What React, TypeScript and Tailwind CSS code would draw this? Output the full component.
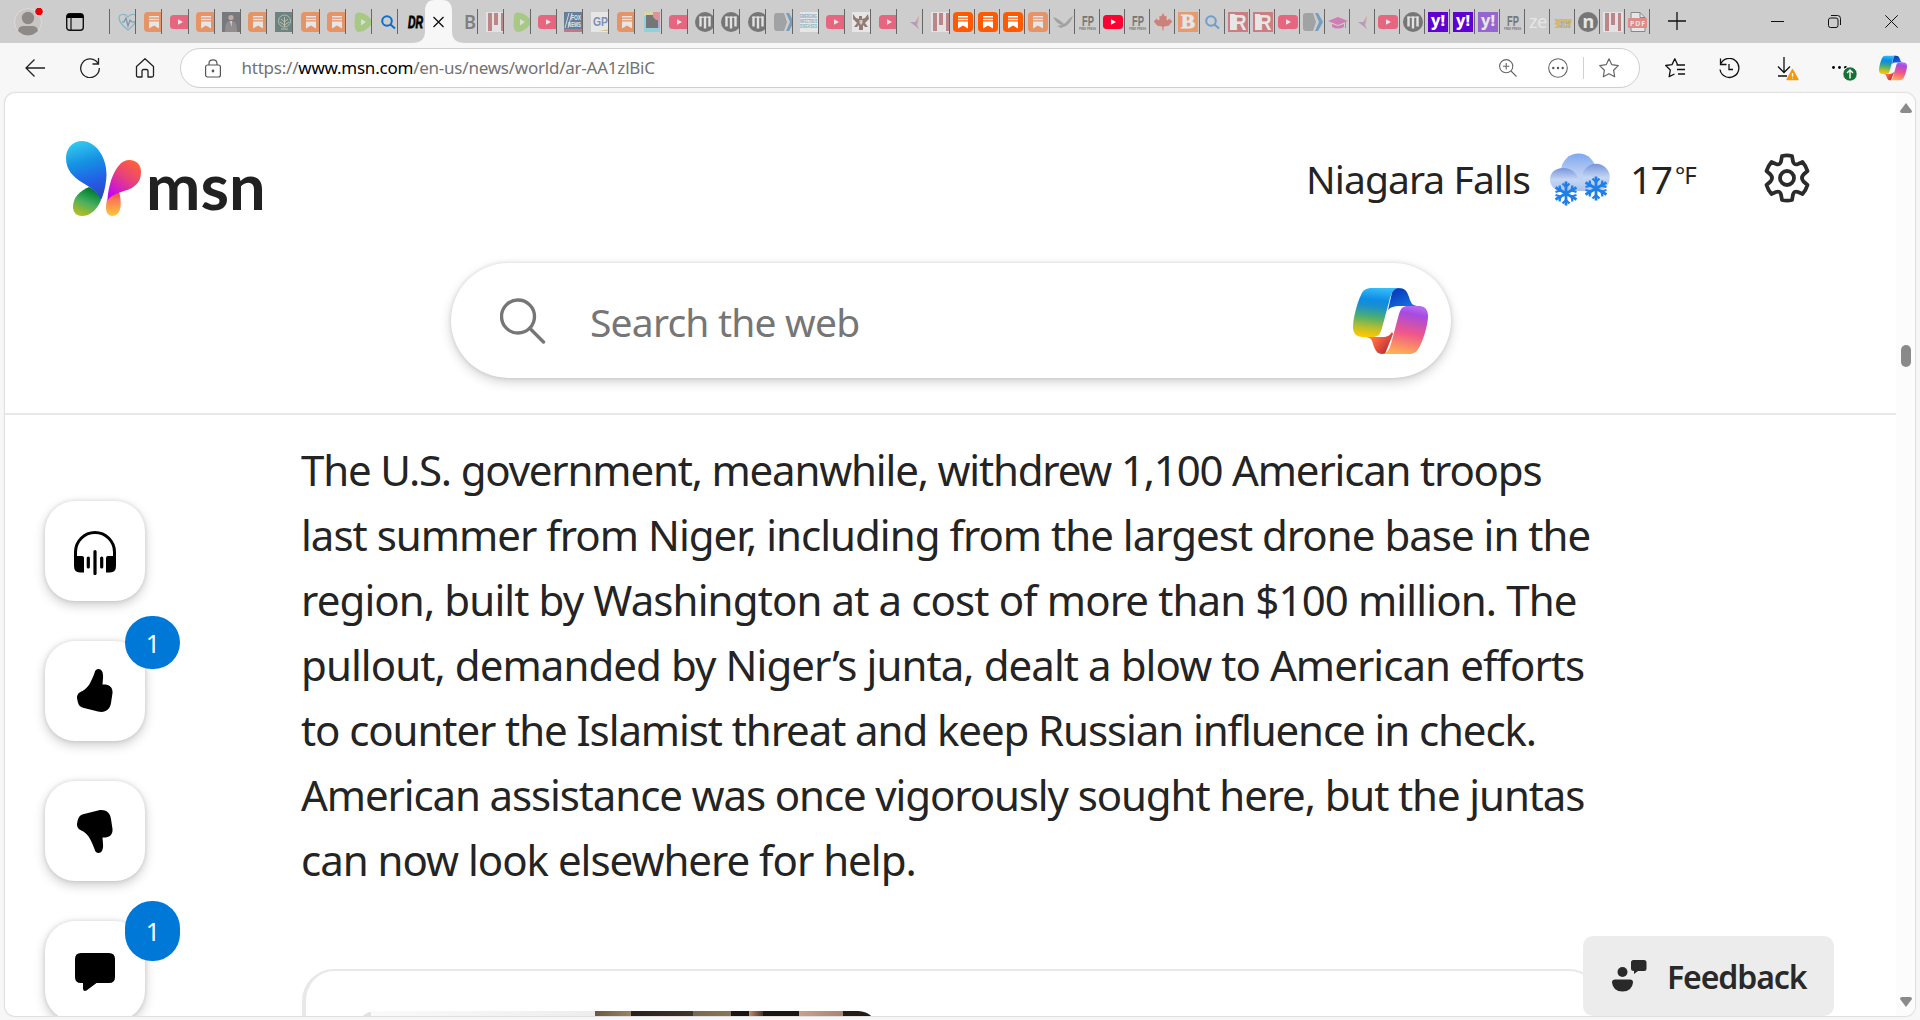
import React from "react";
import clsx from "clsx";

type Favicon = { kind: string; dim?: boolean };

const faded = (kind: string): Favicon => ({ kind, dim: true });
const live = (kind: string): Favicon => ({ kind });

const TABS_BEFORE: Favicon[] = [
  faded("heart"), faded("substack"), faded("youtube"), faded("substack"), faded("portrait"), faded("substack"),
  faded("tree"), faded("substack"), faded("substack"), faded("rumble"), live("search"),
];

const TABS_AFTER: Favicon[] = [
  faded("letterB"), faded("bars"), faded("rumble"), faded("youtube"), faded("fox"), faded("gp"), faded("substack"),
  faded("docs"), faded("youtube"), faded("medal"), faded("medal"), faded("medal"), faded("arrow"), faded("eid"),
  faded("youtube"), faded("seal"), faded("youtube"), faded("bird"), faded("bars"),
];

const TABS_END: Favicon[] = [
  live("substack"), live("substack"), live("substack"), faded("substack"), faded("hawk"), faded("fp"), live("youtube"),
  faded("fp"), faded("maple"), faded("breit"), faded("search"), faded("real"), faded("real"), faded("youtube"),
  faded("arrow"), faded("cap"), faded("bird"), faded("youtube"), faded("medal"), live("yahoo"), live("yahoo"),
  faded("yahoo"), faded("fp"), faded("ze"), faded("sk"), faded("nord"), faded("bars"), faded("pdf"),
];

function glyph(kind: string) {
  switch (kind) {
    case "heart":
      return (
        <g fill="none" stroke="#35a3c9" strokeWidth="1.2">
          <path d="M10 18C5 14 1 10 1 6C1 2 7 1 10 5C13 1 19 2 19 6C19 10 15 14 10 18Z" />
          <path d="M4 10H6L8 6L10 14L12 8L14 10H17" stroke="#225c88" />
        </g>
      );
    case "substack":
      return (
        <g>
          <rect width="20" height="20" rx="4" fill="#ff5a00" />
          <path d="M5 4H15V5.6H5ZM5 6.8H15V8.2H5ZM5 9.4H15V16.5L10 13.4L5 16.5Z" fill="#fff" />
        </g>
      );
    case "youtube":
      return (
        <g>
          <rect y="3" width="20" height="14" rx="3.5" fill="#ff0033" />
          <path d="M8 7.2L13 10L8 12.8Z" fill="#fff" />
        </g>
      );
    case "portrait":
      return (
        <g>
          <rect width="18" height="20" fill="#24292e" />
          <circle cx="9" cy="5.5" r="2.6" fill="#b58b78" />
          <path d="M3 20C3 11 5 9 9 9S15 11 15 20" fill="#5a4f52" />
          <path d="M8 9H10L9.5 15Z" fill="#ddd" />
        </g>
      );
    case "tree":
      return (
        <g>
          <rect width="19" height="20" fill="#123c36" />
          <circle cx="9.5" cy="9" r="6" fill="none" stroke="#79b7a0" />
          <path d="M9.5 15V5M6 7L9.5 10L13 7M5 10L9.5 13L14 10M6 17H13" stroke="#b4b183" fill="none" />
        </g>
      );
    case "rumble":
      return (
        <g>
          <path d="M2 4C2 0 6 0 9 1C13 2 17 5 18.500 8C19.500 10 19 12 17 14C14 17 10 20 6 20C3 20 2 17 1.500 13Z" fill="#85c742" />
          <path d="M8 7L13 10L8 13.500Z" fill="#e6f4d6" />
        </g>
      );
    case "search":
      return (
        <g fill="none" stroke="#0b6fd0" strokeWidth="2">
          <circle cx="8" cy="9" r="4.800" />
          <path d="M11.500 12.500L16 16.500" />
        </g>
      );
    case "letterB":
      return <text x="4" y="17" fontSize="20" fontWeight="600" fill="#333" textLength="12" lengthAdjust="spacingAndGlyphs" className="font-['Noto_Sans']">B</text>;
    case "bars":
      return (
        <g>
          <rect width="20" height="20" fill="#f7f7f7" />
          <path d="M2 1H6V19H2ZM8 1H12V13H8ZM15 1H18V19H15Z" fill="#ad3f45" />
        </g>
      );
    case "fox":
      return (
        <g className="font-['Liberation_Sans'] font-bold">
          <rect width="19" height="20" fill="#003366" />
          <rect y="17" width="19" height="3" fill="#c5222b" />
          <path d="M1 16L5 1M4 16L8 1" stroke="#dce6f3" />
          <text x="7" y="8" fontSize="7" fill="#fff" textLength="10" lengthAdjust="spacingAndGlyphs">FOX</text>
          <text x="4" y="15" fontSize="7" fill="#fff" textLength="13" lengthAdjust="spacingAndGlyphs">NEWS</text>
        </g>
      );
    case "gp":
      return (
        <g>
          <rect width="20" height="20" fill="#fff" />
          <text x="2" y="14" fontSize="12" fontWeight="700" fill="#2d4fa0" textLength="15" lengthAdjust="spacingAndGlyphs" className="font-['Liberation_Sans']">GP</text>
          <path d="M8 19H20V17Z" fill="#eeb43d" />
        </g>
      );
    case "docs":
      return (
        <g>
          <path d="M1 0H11V3H1Z" fill="#ede07a" />
          <path d="M1 4H4V16H17V20H1Z" fill="#57d6eb" />
          <path d="M3 3H11L16 8V16H3Z" fill="#222" />
          <path d="M10 0H17V8H13L10 5Z" fill="#ed5d64" />
          <path d="M15 8H17V16H15Z" fill="#b47bd6" />
        </g>
      );
    case "medal":
      return (
        <g>
          <circle cx="10" cy="10" r="10" fill="#222" />
          <path d="M5.500 4.500V14.500M10 4.500V16.500M14.500 4.500V14.500" stroke="#f5f5f5" strokeWidth="2.400" fill="none" />
          <path d="M4.500 5.200H15.500" stroke="#f5f5f5" strokeWidth="1.200" />
        </g>
      );
    case "arrow":
      return (
        <g>
          <path d="M3 1H10L13 10L10 19H3Q0 19 0 16V4Q0 1 3 1Z" fill="#76797c" />
          <path d="M12 1H15L20 10L15 19H12L16 10Z" fill="#1d72b5" />
        </g>
      );
    case "eid":
      return (
        <g className="font-['Liberation_Sans'] font-bold">
          <rect width="18" height="20" fill="#fff" />
          <text x="0" y="6" fontSize="5" fill="#447db5" textLength="17" lengthAdjust="spacingAndGlyphs">EMERGING</text>
          <text x="0" y="11" fontSize="5" fill="#447db5" textLength="17" lengthAdjust="spacingAndGlyphs">INFECTIOUS</text>
          <text x="0" y="16" fontSize="5" fill="#22a0a5" textLength="17" lengthAdjust="spacingAndGlyphs">DISEASES</text>
        </g>
      );
    case "seal":
      return (
        <g>
          <rect width="18" height="20" fill="#fff" />
          <path d="M1 2L4 6L7 7V4H10V7L13 6L16 2L17 7L13 11L16 15L13 15L11 13L11 18H7L7 13L5 15L2 15L5 11L1 7Z" fill="#5b2a20" />
          <path d="M7.500 8H10.500V11L9 13L7.500 11Z" fill="#d6c7b0" />
        </g>
      );
    case "bird":
      return (
        <g>
          <path d="M5 10L10 10L13 6L12 13L14 17L9 13Z" fill="#9b6aa8" />
          <path d="M11 10L14 3L13 12Z" fill="#e0813c" />
        </g>
      );
    case "hawk":
      return <path d="M0 5C4 6 8 9 11 12C14 10 16 6 20 4C18 9 16 12 13 14L8 16L4 14L9 13C5 12 2 9 0 5Z" fill="#777" />;
    case "fp":
      return (
        <g className="font-['Liberation_Sans_Narrow','Liberation_Sans'] font-bold" fill="#222">
          <text x="4" y="14" fontSize="15.500" textLength="12" lengthAdjust="spacingAndGlyphs">FP</text>
          <text x="1" y="17.500" fontSize="2.800" textLength="17" lengthAdjust="spacingAndGlyphs">FREE PRESS</text>
        </g>
      );
    case "maple":
      return <path d="M10 0L12 4L14 3V8L17 6L18 8L20 9L16 14L11 15V19H9V15L4 14L0 9L2 8L3 6L6 8V3L8 4Z" fill="#c8392b" stroke="#eed8d4" strokeWidth=".7" />;
    case "breit":
      return (
        <g>
          <rect width="20" height="20" fill="#ff6a13" />
          <text x="3" y="16" fontSize="19" fontWeight="700" fill="#fff" stroke="#fff" strokeWidth=".8" textLength="14" lengthAdjust="spacingAndGlyphs" className="font-['Liberation_Serif']">B</text>
        </g>
      );
    case "real":
      return (
        <g>
          <rect width="20" height="20" fill="#c8323a" />
          <path d="M2 2H7V18H2Z" fill="#fff" />
          <text x="5" y="18" fontSize="22" fill="#fff" fontWeight="700" textLength="13.500" lengthAdjust="spacingAndGlyphs" className="font-['Liberation_Sans']">R</text>
        </g>
      );
    case "cap":
      return (
        <g fill="#d32fa0">
          <path d="M0 9L10 5L20 9L10 13Z" />
          <path d="M4 12L10 14L16 12V15Q10 18 4 15Z" />
          <path d="M17 10H18V16H17Z" />
        </g>
      );
    case "yahoo":
      return (
        <g>
          <rect width="20" height="20" fill="#5f01d1" />
          <text x="3" y="14" fontSize="15" fontWeight="800" fill="#fff" textLength="14" lengthAdjust="spacingAndGlyphs" className="font-['Noto_Sans']">y!</text>
        </g>
      );
    case "ze":
      return <text x="1" y="16" fontSize="20" fill="#fff" textLength="18" lengthAdjust="spacingAndGlyphs" className="font-['Lato']">ze</text>;
    case "sk":
      return (
        <g>
          <path d="M1 7H19L17 16H1L4 13L1 12L3 10Z" fill="#d9a514" />
          <text x="6" y="15" fontSize="8" fontWeight="700" fill="#fff" stroke="#555" strokeWidth=".4" className="font-['Liberation_Sans']">SK</text>
        </g>
      );
    case "nord":
      return (
        <g>
          <circle cx="10" cy="10" r="10" fill="#222" />
          <text x="4.500" y="15.500" fontSize="18" fontWeight="700" fill="#fff" className="font-['Noto_Sans']">n</text>
        </g>
      );
    case "pdf":
      return (
        <g>
          <path d="M3 .5H12L17 5.500V19.500H3Z" fill="#fff" stroke="#444" />
          <path d="M12 .5V5.500H17" fill="none" stroke="#444" />
          <rect x="0" y="6" width="19" height="10" rx="1" fill="#ee4d4a" />
          <text x="2" y="13.500" fontSize="7" fontWeight="700" fill="#fff" textLength="15" className="font-['Noto_Sans']">PDF</text>
        </g>
      );
    default:
      return null;
  }
}

function Tab({ icon, tight }: { icon: Favicon; tight?: boolean }) {
  return (
    <div className={clsx("flex shrink-0 items-center", tight ? "w-[25px]" : "w-[26.2px]")}>
      <div className={clsx("flex h-[43px] flex-1 items-center overflow-hidden", tight ? "pl-[3.500px]" : "pl-[7.500px]")}>
        <svg width="20" height="20" viewBox="0 0 20 20" className={clsx("shrink-0 overflow-visible", icon.dim && "opacity-50")}>
          {glyph(icon.kind)}
        </svg>
      </div>
      <div className="h-[25px] w-px shrink-0 bg-[#666]" />
    </div>
  );
}

function CopilotIcon({ id, className }: { id: string; className: string }) {
  return (
    <svg viewBox="0 0 75 66" className={className}>
      <defs>
        <linearGradient id={id + "a"} x1=".55" y1="0" x2=".45" y2="1">
          <stop offset="0" stopColor="#36bcf8" />
          <stop offset=".25" stopColor="#0e8ce4" />
          <stop offset=".38" stopColor="#1a90d0" />
          <stop offset=".6" stopColor="#4bae73" />
          <stop offset=".82" stopColor="#b8bf2d" />
          <stop offset="1" stopColor="#ffc800" />
        </linearGradient>
        <linearGradient id={id + "b"} x1=".6" y1="0" x2=".4" y2="1">
          <stop offset="0" stopColor="#b468f0" />
          <stop offset=".15" stopColor="#a64be0" />
          <stop offset=".55" stopColor="#f0568b" />
          <stop offset="1" stopColor="#ffb152" />
        </linearGradient>
        <linearGradient id={id + "c"} x1=".3" y1="0" x2="1" y2="1">
          <stop offset="0" stopColor="#0a37b8" />
          <stop offset="1" stopColor="#1486ed" />
        </linearGradient>
        <linearGradient id={id + "d"} x1="0" y1="0" x2="1" y2=".6">
          <stop offset="0" stopColor="#ff9746" />
          <stop offset=".5" stopColor="#f8623e" />
          <stop offset="1" stopColor="#b82e39" />
        </linearGradient>
      </defs>
      <path d="M40 0H45C52 0 54 3 56 9C58 16 60 18 66 18H46C41 18 38 19 35 22Z" fill={`url(#${id}c)`} />
      <path d="M39 44L40 46L32 66H29C24 66 22 62 20 56C19 51 17 49 11 49H29C35 49 37 47 39 44Z" fill={`url(#${id}d)`} />
      <path d="M19 0H47C40 0 38 6 36 14L29 40C27 47 25 49 19 49H10C3 49 0 45 0 39C0 31 4 15 8 7C10 2 13 0 19 0Z" fill={`url(#${id}a)`} />
      <path d="M56 66H28C35 66 37 60 39 52L46 26C48 20 50 18 55 18H66C72 18 75 22 75 28C75 36 71 50 67 58C64 64 61 66 56 66Z" fill={`url(#${id}b)`} />
    </svg>
  );
}

function TabStrip() {
  return (
    <div className="flex h-[43px] bg-[#cdcdcd]">
      <div className="flex w-[109px] shrink-0 items-center pl-[14px]">
        <svg width="30" height="34" viewBox="0 0 30 34">
          <circle cx="14" cy="17" r="13.500" fill="#c8c6c4" stroke="#dedbd6" />
          <circle cx="14" cy="13" r="6.200" fill="#8c8986" />
          <path d="M4 26C5 20 9 21 14 21S23 20 24 26Q14 35 4 26Z" fill="#8c8986" />
          <circle cx="25" cy="6.500" r="4.300" fill="#e60000" stroke="#e6e6e6" />
        </svg>
        <svg width="18" height="18" viewBox="0 0 18 18" className="ml-[22px]">
          <rect x=".7" y=".7" width="16.600" height="16.600" rx="3" fill="none" stroke="#111" strokeWidth="1.400" />
          <path d="M1 5V3Q1 .7 3 .7H15Q17 .7 17 3V5Z" />
          <path d="M5 5V17" stroke="#111" strokeWidth="1.200" />
        </svg>
      </div>
      <div className="flex items-center">
        <div className="h-[25px] w-px shrink-0 bg-[#666]" />
        {TABS_BEFORE.map((t, i) => (
          <Tab key={i} icon={t} />
        ))}
      </div>
      <svg width="27" height="43" viewBox="0 0 27 43" className="shrink-0 overflow-visible">
        <text x="10" y="27.500" fontSize="16" fontWeight="900" fontStyle="italic" stroke="#000" strokeWidth=".8" textLength="15" lengthAdjust="spacingAndGlyphs" className="font-['Liberation_Sans']">DR</text>
      </svg>
      <svg width="53" height="43" viewBox="0 0 53 43" className="-mx-[13px] shrink-0">
        <path d="M0 43C9 43 13 39 13 31V11C13 3 17 0 23 0H30C36 0 40 3 40 11V31C40 39 44 43 53 43Z" fill="#f7f7f7" />
        <path d="M21.500 17L31.500 27M31.500 17L21.500 27" stroke="#111" strokeWidth="1.300" />
      </svg>
      <div className="flex items-center">
        {TABS_AFTER.map((t, i) => (
          <Tab key={i} icon={t} />
        ))}
        {TABS_END.map((t, i) => (
          <Tab key={i} icon={t} tight />
        ))}
      </div>
      <div className="flex flex-1 items-center justify-between pl-[18px] pr-[22px]">
        <svg width="18" height="18" viewBox="0 0 18 18" className="-mt-0.5">
          <path d="M9 0V18M0 9H18" stroke="#111" strokeWidth="1.300" />
        </svg>
        <div className="flex items-center gap-[44px]">
          <svg width="13" height="13" viewBox="0 0 13 13"><path d="M0 6.500H13" stroke="#111" /></svg>
          <svg width="13" height="13" viewBox="0 0 13 13" fill="none" stroke="#111">
            <rect x=".5" y="3" width="9.500" height="9.500" rx="2" />
            <path d="M3 .5H9.500Q12.500 .5 12.500 3.500V10" />
          </svg>
          <svg width="13" height="13" viewBox="0 0 13 13"><path d="M.3.3L12.700 12.700M12.700.3L.3 12.700" stroke="#111" /></svg>
        </div>
      </div>
    </div>
  );
}

function Toolbar() {
  return (
    <div className="flex h-[50px] items-center">
      <div className="flex w-[180px] items-center gap-[35px] pl-[25px]">
        <svg width="20" height="20" viewBox="0 0 20 20" fill="none" stroke="#222" strokeWidth="1.300">
          <path d="M20 10H1M9.500 1.500L1 10L9.500 18.500" />
        </svg>
        <svg width="20" height="20" viewBox="0 0 20 20" fill="none" stroke="#222" strokeWidth="1.300">
          <path d="M18 5.500A9.300 9.300 0 1 0 19.300 10M18.500 0V6H12.500" />
        </svg>
        <svg width="20" height="20" viewBox="0 0 20 20" fill="none" stroke="#222" strokeWidth="1.300" strokeLinejoin="round">
          <path d="M1.500 8.500L10 .8L18.500 8.500V17.500Q18.500 19 17 19H13V13Q13 11.500 11.500 11.500H8.500Q7 11.500 7 13V19H3Q1.500 19 1.500 17.500Z" />
        </svg>
      </div>
      <div className="flex h-[40px] w-[1460px] items-center rounded-full border border-[#cfcfcf] bg-white pl-6 pr-5">
        <svg width="16" height="19" viewBox="0 0 16 19" fill="none" stroke="#555" strokeWidth="1.200">
          <rect x=".6" y="6" width="14.800" height="12" rx="2" />
          <path d="M4 6V4.500Q4 .8 8 .8T12 4.500V6" />
          <circle cx="8" cy="12" r=".8" fill="#555" />
        </svg>
        <span className="ml-[20.500px] flex-1 whitespace-nowrap text-[17px] tracking-[-0.230px] text-[#727272]">
          https://<span className="text-black">www.msn.com</span>/en-us/news/world/ar-AA1zlBiC
        </span>
        <svg width="18" height="18" viewBox="0 0 18 18" fill="none" stroke="#666" strokeWidth="1.100">
          <circle cx="7.200" cy="7.200" r="6.600" />
          <path d="M12 12L17.500 17.500M4 7.200H10.400M7.200 4V10.400" />
        </svg>
        <svg width="20" height="20" viewBox="0 0 20 20" fill="none" stroke="#666" strokeWidth="1.100" className="ml-[31px]">
          <circle cx="10" cy="10" r="9.300" />
          <g fill="#555" stroke="none"><circle cx="5.300" cy="10" r="1.200" /><circle cx="10" cy="10" r="1.200" /><circle cx="14.700" cy="10" r="1.200" /></g>
        </svg>
        <div className="mx-[15px] h-[22px] w-px bg-[#d2d2d2]" />
        <svg width="20" height="20" viewBox="0 0 20 20" fill="none" stroke="#666" strokeWidth="1.200" strokeLinejoin="round">
          <path d="M10 .8L12.800 6.700L19.300 7.600L14.600 12.200L15.700 18.800L10 15.700L4.300 18.800L5.400 12.200L.7 7.600L7.200 6.700Z" />
        </svg>
      </div>
      <div className="flex flex-1 items-center pl-[25px]">
        <svg width="20" height="20" viewBox="0 0 20 20" fill="none" stroke="#111" strokeWidth="1.300" strokeLinejoin="round">
          <path d="M12.500 6.500L9.800 .8L7 6.600L.7 7.500L5.300 12L4.200 18.700L9.500 16M11.500 7H20M12 11.500H20M13 16H20" />
        </svg>
        <svg width="21" height="21" viewBox="0 0 21 21" fill="none" stroke="#111" strokeWidth="1.300" className="ml-[34px]">
          <path d="M1.500 6.500A9.500 9.500 0 1 1 1 11.500M1.500 .5V6.500H7.500M10 6V11.500H14" />
        </svg>
        <svg width="22" height="24" viewBox="0 0 22 24" fill="none" stroke="#111" strokeWidth="1.300" className="mt-[2px] ml-[37px]">
          <path d="M7 0V15M1 9.500L7 15.500L13 9.500M1 19H10" />
          <path d="M15.500 12.500L21 22.500H10Z" fill="#f7980b" stroke="#f7980b" strokeLinejoin="round" />
          <path d="M15.500 16V19.500M15.500 20.700V21.600" stroke="#fff" />
        </svg>
        <svg width="26" height="24" viewBox="0 0 26 24" className="mt-[6px] ml-[32px]">
          <circle cx="2.500" cy="8.500" r="1.400" /><circle cx="8.500" cy="8.500" r="1.400" /><circle cx="14.500" cy="8.500" r="1.400" />
          <circle cx="19" cy="15" r="7.200" fill="#127334" stroke="#f7f7f7" />
          <path d="M19 19.500V11M16 14L19 11L22 14" fill="none" stroke="#fff" strokeWidth="1.400" />
        </svg>
        <CopilotIcon id="bar" className="ml-[22px] h-[26px] w-[28px]" />
      </div>
    </div>
  );
}

function MsnLogo() {
  return (
    <div className="flex items-start">
      <svg width="75" height="75" viewBox="0 0 75 75">
        <defs>
          <linearGradient id="wingBlue" x1=".4" y1="0" x2=".6" y2="1">
            <stop offset="0" stopColor="#33c7ee" />
            <stop offset=".35" stopColor="#1592e3" />
            <stop offset=".7" stopColor="#235fe6" />
            <stop offset="1" stopColor="#2949c2" />
          </linearGradient>
          <linearGradient id="wingGreen" x1=".7" y1="0" x2=".3" y2="1">
            <stop offset="0" stopColor="#006b22" />
            <stop offset=".25" stopColor="#159142" />
            <stop offset=".55" stopColor="#4cb05e" />
            <stop offset="1" stopColor="#b9bd20" />
          </linearGradient>
          <linearGradient id="wingPink" x1=".8" y1="0" x2=".2" y2="1">
            <stop offset="0" stopColor="#ff6236" />
            <stop offset=".45" stopColor="#e6407f" />
            <stop offset="1" stopColor="#c000ff" />
          </linearGradient>
          <linearGradient id="wingOrange" x1=".5" y1="0" x2=".5" y2="1">
            <stop offset="0" stopColor="#e84a43" />
            <stop offset=".35" stopColor="#ff7b55" />
            <stop offset="1" stopColor="#ffc936" />
          </linearGradient>
        </defs>
        <path d="M23 46C29 49 33 53 35 59C31 69 24 75 16 75C10 75 7 71 7 66C7 56 14 50 23 46Z" fill="url(#wingGreen)" />
        <path d="M16 0C30 0 41 17 40.500 34C40 45 37.500 54 35 59C31 50 25 47 17 42C7 36 0 29 0 17C0 7 7 0 16 0Z" fill="url(#wingBlue)" />
        <path d="M53 51C56 60 56 75 46.500 75C38 75 40 63 41 59C44 54 49 53 53 51Z" fill="url(#wingOrange)" />
        <path d="M41.500 59.500C42.500 40 51 19 63 19C71 19 75 24 75 31C75 49 57 49 48 54C45 55 43 57 41.500 59.500Z" fill="url(#wingPink)" />
      </svg>
      <span className="ml-[5px] mt-[12px] text-[65px] leading-[65px] font-bold text-[#212121] font-['Lato',sans-serif]">msn</span>
    </div>
  );
}

function SnowCloud() {
  return (
    <svg width="60" height="54" viewBox="0 0 60 54">
      <defs>
        <linearGradient id="cloudBack" x1="0" y1="0" x2="0" y2="1">
          <stop offset="0" stopColor="#7fa8ef" />
          <stop offset=".6" stopColor="#bdd0f3" />
          <stop offset="1" stopColor="#cbdcf5" />
        </linearGradient>
        <linearGradient id="cloudFront" x1="0" y1="0" x2="0" y2="1">
          <stop offset="0" stopColor="#7594dc" />
          <stop offset=".5" stopColor="#c4d6f3" />
          <stop offset="1" stopColor="#a9c2ee" />
        </linearGradient>
        <g id="flake" stroke="#1f7fe8" strokeWidth="2.800" fill="none">
          <path d="M0 -12V12M-10.500 -6L10.500 6M-10.500 6L10.500 -6" />
          <path d="M-3.500 -10L0 -6.500L3.500 -10M-3.500 10L0 6.500L3.500 10M-10.500 -1.500L-5.500 -3L-6.500 -8M10.500 1.500L5.500 3L6.500 8M-10.500 1.500L-5.500 3L-6.500 8M10.500 -1.500L5.500 -3L6.500 -8" strokeWidth="2.200" />
        </g>
      </defs>
      <circle cx="28.500" cy="18" r="17.500" fill="url(#cloudBack)" />
      <path d="M14 38V24H44V38Z" fill="#c0d2f2" />
      <circle cx="46" cy="24.500" r="13.800" fill="url(#cloudFront)" />
      <path d="M13 15C23 15 28 22 28 27L44 28V38H13C5 38 0 33 0 26.500S5 15 13 15Z" fill="url(#cloudFront)" />
      <use href="#flake" x="16" y="40.500" />
      <use href="#flake" x="46" y="35.500" />
    </svg>
  );
}

function SiteHeader() {
  return (
    <header className="h-[322px] border-b-2 border-[#e8e8e8]">
      <div className="flex h-[170px] items-start justify-between pl-[61px] pr-[85px]">
        <div className="pt-[48px]">
          <MsnLogo />
        </div>
        <div className="flex items-start pt-[60px] text-[#242424]">
          <span className="mt-[-2px] w-[244px] whitespace-nowrap text-[39px] leading-[56px] tracking-[-0.900px]">Niagara Falls</span>
          <SnowCloud />
          <span className="mt-[-2px] ml-[20px] w-[45px] whitespace-nowrap text-[39px] leading-[56px] tracking-[-1.500px]">17</span>
          <span className="mt-[6px] w-[22px] text-[24px] leading-8 tracking-[-1px]">°F</span>
          <svg width="48" height="50" viewBox="-1 0 47 50" fill="none" stroke="#2b2b2b" strokeWidth="3.800" strokeLinejoin="round" className="ml-[66px]">
            <circle cx="22.500" cy="25" r="7" />
            <path d="M17.500 3Q22.500 1.800 27.500 3L28.500 8.500Q29.500 12.500 33.500 11L38 9Q41.500 13 43 18L39 21.500Q36 25 39 28.500L43 32Q41.500 37 38 41L33.500 39Q29.500 37.500 28.500 41.500L27.500 47Q22.500 48.200 17.500 47L16.500 41.500Q15.500 37.500 11.500 39L7 41Q3.500 37 2 32L6 28.500Q9 25 6 21.500L2 18Q3.500 13 7 9L11.500 11Q15.500 12.500 16.500 8.500Z" />
          </svg>
        </div>
      </div>
      <div className="ml-[446px] flex h-[115px] w-[1000px] items-center rounded-full bg-white pl-[49px] pr-[23px] shadow-[0_4px_12px_rgba(0,0,0,0.18),0_0_4px_rgba(0,0,0,0.12)]">
        <svg width="46" height="46" viewBox="0 0 46 46" fill="none" stroke="#767676" strokeWidth="3.400" strokeLinecap="round">
          <circle cx="18" cy="18.500" r="16.500" />
          <path d="M30 30.500L43.500 44" />
        </svg>
        <span className="ml-[44px] mt-[2px] flex-1 whitespace-nowrap text-[39px] leading-[56px] tracking-[-0.800px] text-[#767676]">Search the web</span>
        <CopilotIcon id="search" className="h-[66px] w-[75px]" />
      </div>
    </header>
  );
}

function ActionButton({ badge, tall, children }: { badge?: number; tall?: boolean; children: React.ReactNode }) {
  return (
    <div className="relative flex size-[100px] shrink-0 items-center justify-center rounded-[30px] bg-white shadow-[0_4px_12px_rgba(0,0,0,0.2),0_0_4px_rgba(0,0,0,0.12)]">
      {children}
      {badge !== undefined && (
        <span
          className={clsx(
            "absolute left-[80px] flex w-[55px] items-center justify-center rounded-[27px] bg-[#0078d7] pt-[2px] pl-px text-[25px] text-white",
            tall ? "-top-[20px] h-[60px]" : "-top-[25px] h-[53px]"
          )}
        >
          {badge}
        </span>
      )}
    </div>
  );
}

const THUMB = "M21.500 0C25 0 26.500 4 26 9L25.500 15.500C32 15 36 18 35.500 24L34 34C33 41 28 44 21 42.500L7 39C2 38 1 35 0 29C0 25 2 23.500 5.500 22C12 18 14 13 17.500 4C18 1.500 19.500 0 21.500 0Z";

function ActionRail() {
  return (
    <aside className="flex w-[296px] shrink-0 flex-col gap-[40px] pt-[86px] pl-[40px]">
      <ActionButton>
        <svg width="42" height="44" viewBox="0 0 42 44" className="mt-[3px]">
          <path d="M1.500 32V21A19.500 19.500 0 0 1 40.500 21V32" fill="none" stroke="#000" strokeWidth="3" />
          <path d="M0 25H8Q10 25 10 27V41.500H6Q0 41.500 0 35ZM42 25H34Q32 25 32 27V41.500H36Q42 41.500 42 35Z" />
          <path d="M14.300 27V36M21 20.500V42.500M27.700 27V36" stroke="#000" strokeWidth="3.200" strokeLinecap="round" />
        </svg>
      </ActionButton>
      <ActionButton badge={1}>
        <svg width="36" height="43" viewBox="0 0 36 43" className="-mt-[2px]"><path d={THUMB} /></svg>
      </ActionButton>
      <ActionButton>
        <svg width="36" height="43" viewBox="0 0 36 43" className="-scale-y-100"><path d={THUMB} /></svg>
      </ActionButton>
      <ActionButton badge={1} tall>
        <svg width="40" height="38" viewBox="0 0 40 38" className="mt-[2px]">
          <path d="M6 0H34Q40 0 40 6V24Q40 30 34 30H21.500L11.500 37.500Q8 39 8 35.500V30H6Q0 30 0 24V6Q0 0 6 0Z" />
        </svg>
      </ActionButton>
    </aside>
  );
}

function Article() {
  return (
    <main className="w-[1300px] shrink-0 pt-[22px]">
      <p className="whitespace-nowrap text-[42px] leading-[65px] text-[#242424]">
        <span className="block tracking-[-1.180px]">The U.S. government, meanwhile, withdrew 1,100 American troops</span>
        <span className="block tracking-[-0.985px]">last summer from Niger, including from the largest drone base in the</span>
        <span className="block tracking-[-0.880px]">region, built by Washington at a cost of more than $100 million. The</span>
        <span className="block tracking-[-0.930px]">pullout, demanded by Niger’s junta, dealt a blow to American efforts</span>
        <span className="block tracking-[-1.090px]">to counter the Islamist threat and keep Russian influence in check.</span>
        <span className="block tracking-[-1.110px]">American assistance was once vigorously sought here, but the juntas</span>
        <span className="block tracking-[-1.010px]">can now look elsewhere for help.</span>
      </p>
      <div className="mt-[77px] ml-px h-[200px] rounded-[32px] border-2 border-l-4 border-[#e8e8e8] pt-[40px] pl-[50px]">
        {/* Story photo, only its top edge is in view */}
        <div className="flex h-[120px] w-[522px] overflow-hidden rounded-[20px] bg-[#efefef]">
          <div className="w-[15px] bg-[#dce5e2]" />
          <div className="w-[224px] bg-linear-to-r from-[#fafafa] to-[#ededed]" />
          <div className="w-[36px] bg-linear-to-r from-[#6b5842] to-[#9c8464]" />
          <div className="w-[62px] bg-linear-to-r from-[#2a1f19] to-[#41342a]" />
          <div className="w-[38px] bg-linear-to-r from-[#7a674c] to-[#8a7759]" />
          <div className="w-[18px] bg-[#1a1412]" />
          <div className="w-[14px] bg-linear-to-r from-[#c48f6e] to-[#4a3328]" />
          <div className="w-[36px] bg-[#1c1613]" />
          <div className="w-[44px] bg-linear-to-r from-[#c9a08c] to-[#a98470]" />
          <div className="flex-1 bg-[#241c17]" />
        </div>
      </div>
    </main>
  );
}

function ScrollBar() {
  return (
    <div className="flex w-[19px] shrink-0 flex-col items-center bg-[#fcfcfc] pt-[10px] pb-[9px]">
      <svg width="12" height="10" viewBox="0 0 12 10"><path d="M6 0L12 8Q12 10 10 10H2Q0 10 0 8Z" fill="#8a8a8a" /></svg>
      <div className="mt-[232px] h-[22px] w-[10px] rounded-full bg-[#8a8a8a]" />
      <svg width="12" height="10" viewBox="0 0 12 10" className="mt-auto"><path d="M6 10L0 2Q0 0 2 0H10Q12 0 12 2Z" fill="#8a8a8a" /></svg>
    </div>
  );
}

export default function App() {
  return (
    <div className="h-[1020px] w-[1920px] overflow-hidden bg-[#f7f7f7] font-['Noto_Sans',sans-serif]">
      <TabStrip />
      <Toolbar />
      <div className="relative mx-[5px] flex h-[923px] overflow-hidden rounded-[10px] bg-white shadow-[0_0_1px_1px_#dddddd]">
        <div className="flex w-[1891px] shrink-0 flex-col">
          <SiteHeader />
          <div className="flex h-[601px] overflow-hidden">
            <ActionRail />
            <Article />
          </div>
        </div>
        <ScrollBar />
        <button className="absolute right-[81px] bottom-0 flex h-[80px] w-[251px] items-center rounded-[10px] bg-[#ececec] pl-[29px] text-[#292929]">
          <svg width="35" height="32" viewBox="0 0 35 32" fill="#292929">
            <circle cx="10.500" cy="12" r="5" />
            <path d="M3 19.500H18Q21 19.500 21 22.500Q20 31.500 10.500 31.500T0 22.500Q0 19.500 3 19.500Z" />
            <path d="M21.500 0H32Q34.500 0 34.500 2.500V8.500Q34.500 11 32 11H26L22 14V11Q19 11 19 8.500V2.500Q19 0 21.500 0Z" />
          </svg>
          <span className="ml-[20px] mt-[2px] text-[32px] leading-[44px] font-semibold tracking-[-1.100px]">Feedback</span>
        </button>
      </div>
    </div>
  );
}
